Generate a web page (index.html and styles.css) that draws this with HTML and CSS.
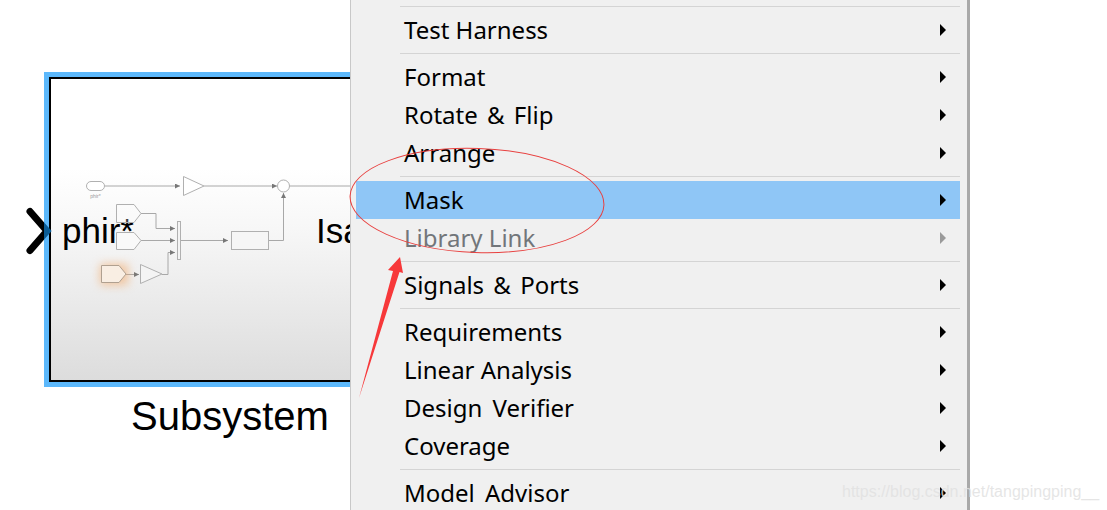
FILE: index.html
```html
<!DOCTYPE html>
<html lang="en">
<head>
<meta charset="utf-8">
<title>Subsystem context menu</title>
<link rel="stylesheet" href="styles.css">
</head>
<body>
<div class="page">
  <section class="canvas">
    <div class="subsystem">
      <div class="block">
        <div class="ports"><span>phir*</span><span>Isa</span></div>
        <svg class="diagram" width="372" height="316" viewBox="44 72 372 316" aria-hidden="true">
          <defs>
            <marker id="ah" markerWidth="6" markerHeight="6" refX="5" refY="2.5" orient="auto" markerUnits="userSpaceOnUse"><path d="M0 0L5 2.5L0 5Z" fill="#777"/></marker>
            <filter id="glow" x="-80%" y="-80%" width="260%" height="260%"><feGaussianBlur stdDeviation="5"/></filter>
          </defs>
          <g fill="none" stroke="#c4c4c4" stroke-width="1.4">
            <path d="M105 186H180" marker-end="url(#ah)"/>
            <path d="M204 186H277" marker-end="url(#ah)"/>
            <path d="M289 186H351"/>
          </g>
          <g fill="none" stroke="#a8a8a8" stroke-width="1">
            <path d="M141 213.500H156V228.500H175" marker-end="url(#ah)"/>
            <path d="M141 240.500H175" marker-end="url(#ah)"/>
            <path d="M126 274.500H139" marker-end="url(#ah)"/>
            <path d="M162 274.500H168V252.500H175" marker-end="url(#ah)"/>
            <path d="M181 240.500H228" marker-end="url(#ah)"/>
            <path d="M269 240.500H283.500V193" marker-end="url(#ah)"/>
          </g>
          <rect x="100" y="264" width="28" height="21" fill="#f2a868" opacity=".6" filter="url(#glow)"/>
          <g stroke="#b0b0b0" stroke-width="1">
            <rect x="86.500" y="181.500" width="18" height="9" rx="4.500" fill="#fff"/>
            <path d="M183.500 176.500L204 186L183.500 195.500Z" fill="#fff"/>
            <circle cx="283.500" cy="186" r="6" fill="#fff"/>
            <path d="M116.500 204.500H134L141 213.500L134 222.500H116.500Z" fill="#fff" fill-opacity=".25"/>
            <path d="M116.500 232.500H134L141 240.500L134 249.500H116.500Z" fill="#f9f9f9"/>
            <path d="M101.500 265.500H119L126 274L119 282.500H101.500Z" fill="#f9eee3" stroke="#b0a090"/>
            <path d="M140.500 264.500L162 274L140.500 283.500Z" fill="#f4f4f4"/>
            <rect x="177.500" y="221.500" width="3" height="38" fill="#f4f4f4"/>
            <rect x="231.500" y="231.500" width="37" height="18" fill="#f6f6f6"/>
          </g>
          <text x="95.500" y="198" class="tiny">phir*</text>
        </svg>
      </div>
      <div class="label">Subsystem</div>
    </div>
  </section>
  <nav class="menu">
    <div class="sep"></div>
    <div class="item"><span>Test Harness</span><i class="arrow"></i></div>
    <div class="sep"></div>
    <div class="item"><span>Format</span><i class="arrow"></i></div>
    <div class="item wide"><span>Rotate &amp; Flip</span><i class="arrow"></i></div>
    <div class="item"><span>Arrange</span><i class="arrow"></i></div>
    <div class="sep"></div>
    <div class="item active"><span>Mask</span><i class="arrow"></i></div>
    <div class="item disabled"><span>Library Link</span><i class="arrow"></i></div>
    <div class="sep"></div>
    <div class="item wide"><span>Signals &amp; Ports</span><i class="arrow"></i></div>
    <div class="sep"></div>
    <div class="item"><span>Requirements</span><i class="arrow"></i></div>
    <div class="item"><span>Linear Analysis</span><i class="arrow"></i></div>
    <div class="item loose"><span>Design Verifier</span><i class="arrow"></i></div>
    <div class="item"><span>Coverage</span><i class="arrow"></i></div>
    <div class="sep"></div>
    <div class="item loose"><span>Model Advisor</span><i class="arrow"></i></div>
  </nav>
  <svg class="chevron" width="40" height="60" viewBox="20 200 40 60" aria-hidden="true">
    <defs>
      <linearGradient id="chev" gradientUnits="userSpaceOnUse" x1="20" y1="0" x2="60" y2="0">
        <stop offset=".6" stop-color="#000"/><stop offset=".6" stop-color="#0b5c95"/>
      </linearGradient>
    </defs>
    <path d="M30 211.500L47 231L30 250.500" fill="none" stroke="url(#chev)" stroke-width="7" stroke-linecap="round"/>
  </svg>
  <svg class="markup" width="1107" height="510" viewBox="0 0 1107 510" aria-hidden="true">
    <ellipse cx="477" cy="200.500" rx="127" ry="52" transform="rotate(2 477 200.500)" fill="none" stroke="#e8403f" stroke-width="1"/>
    <path d="M359 398L393 271L388 270L400 257L403 273L399.500 272Z" fill="#f7383a"/>
  </svg>
  <div class="watermark">https://blog.csdn.net/tangpingping__</div>
</div>
</body>
</html>
```
FILE: styles.css
```css
* { box-sizing: border-box; }
html, body { margin: 0; height: 510px; overflow: hidden; background: #fff; }
.page { position: relative; display: flex; width: 1107px; height: 510px; overflow: hidden; font-family: "Noto Sans", sans-serif; }
.canvas { width: 350px; flex: none; overflow: hidden; padding: 72px 0 0 44px; }
.subsystem { width: 372px; font-family: "Liberation Sans", Arial, sans-serif; color: #000; }
.block { position: relative; height: 315px; border: 5px solid #5cb8fb; outline: 2px solid #000; outline-offset: -7px; background: linear-gradient(#fff 0, #fff 30%, #f7f7f7 50%, #dcdcdc 100%); }
.ports { display: flex; gap: 182px; padding: 134px 13px 0; font-size: 35px; line-height: 40px; }
.diagram { position: absolute; left: -5px; top: -5px; }
.tiny { font-size: 5px; fill: #999; text-anchor: middle; }
.label { font-size: 40px; line-height: 46px; text-align: center; margin-top: 6px; }
.menu { width: 620px; height: 510px; flex: none; overflow: hidden; background: #f0f0f0; border-left: 1px solid #c8c8c8; border-right: 3px solid #a9a9a9; padding: 2px 7px 0 5px; color: #000; font-size: 24px; }
.item { display: flex; justify-content: space-between; align-items: center; height: 38px; padding: 0 14px 0 48px; line-height: 38px; flex: none; }
.item.active { background: #8fc6f6; }
.item.disabled { color: #72767a; }
.item.wide { word-spacing: 3px; }
.item.loose { word-spacing: 4px; }
.sep { height: 9px; padding-top: 4px; margin-left: 44px; }
.sep::before { content: ""; display: block; height: 1px; background: #d4d4d4; }
.arrow { width: 0; height: 0; border-style: solid; border-width: 6px 0 6px 6px; border-color: transparent transparent transparent #000; }
.disabled .arrow { border-left-color: #9a9a9a; }
.chevron { position: absolute; left: 20px; top: 200px; }
.markup { position: absolute; left: 0; top: 0; pointer-events: none; }
.watermark { position: absolute; left: 842px; top: 482px; font-family: "Liberation Sans", Arial, sans-serif; font-size: 16px; line-height: 20px; color: rgba(225, 225, 225, .85); }
```
